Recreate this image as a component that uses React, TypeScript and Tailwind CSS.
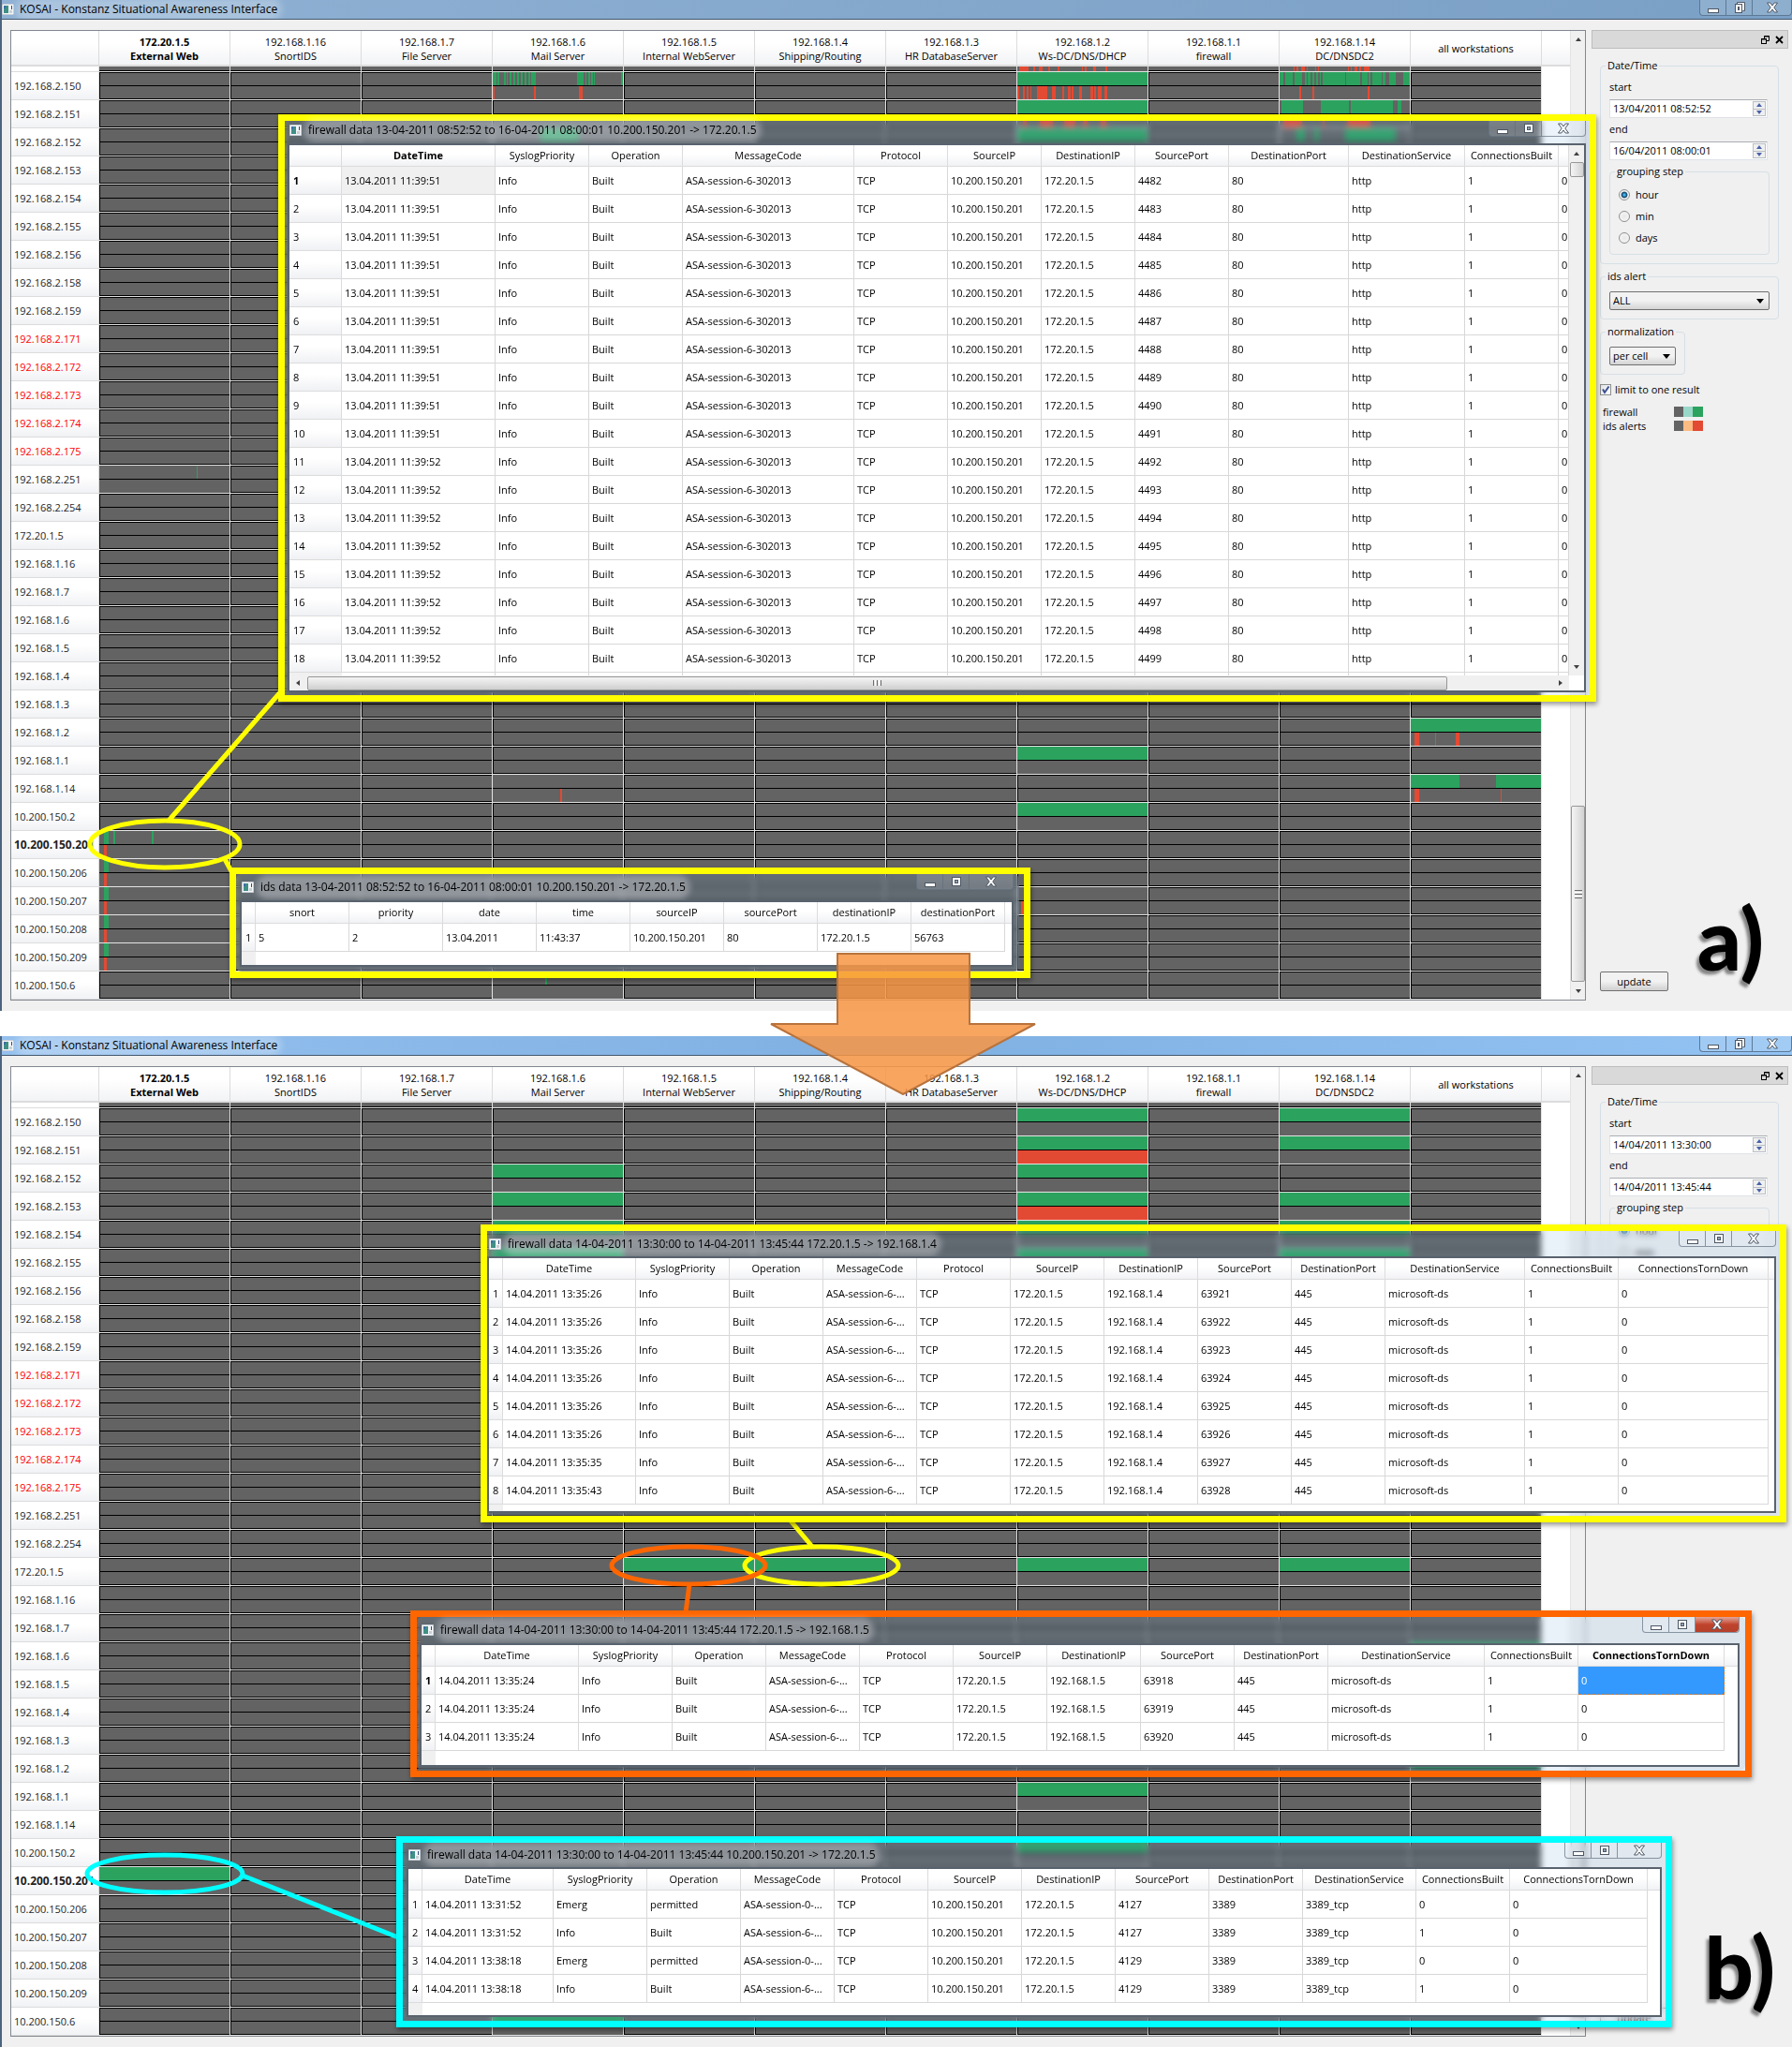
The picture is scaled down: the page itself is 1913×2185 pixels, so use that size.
import { useId } from 'react';
import clsx from 'clsx';

type Span = [number, number];
type Cell = { fw?: Span[]; ids?: Span[] };
type CellMap = Record<string, Cell>;

const HOSTS = [
  ['172.20.1.5', 'External Web'],
  ['192.168.1.16', 'SnortIDS'],
  ['192.168.1.7', 'File Server'],
  ['192.168.1.6', 'Mail Server'],
  ['192.168.1.5', 'Internal WebServer'],
  ['192.168.1.4', 'Shipping/Routing'],
  ['192.168.1.3', 'HR DatabaseServer'],
  ['192.168.1.2', 'Ws-DC/DNS/DHCP'],
  ['192.168.1.1', 'firewall'],
  ['192.168.1.14', 'DC/DNSDC2'],
  ['all workstations'],
];

const SOURCES = [
  '192.168.2.150',
  '192.168.2.151',
  '192.168.2.152',
  '192.168.2.153',
  '192.168.2.154',
  '192.168.2.155',
  '192.168.2.156',
  '192.168.2.158',
  '192.168.2.159',
  '192.168.2.171',
  '192.168.2.172',
  '192.168.2.173',
  '192.168.2.174',
  '192.168.2.175',
  '192.168.2.251',
  '192.168.2.254',
  '172.20.1.5',
  '192.168.1.16',
  '192.168.1.7',
  '192.168.1.6',
  '192.168.1.5',
  '192.168.1.4',
  '192.168.1.3',
  '192.168.1.2',
  '192.168.1.1',
  '192.168.1.14',
  '10.200.150.2',
  '10.200.150.201',
  '10.200.150.206',
  '10.200.150.207',
  '10.200.150.208',
  '10.200.150.209',
  '10.200.150.6',
];

const SUSPICIOUS = /^192\.168\.2\.17[1-5]$/;
const SELECTED = '10.200.150.201';
const FULL: Span[] = [[0, 140]];

// keys are "<source>|<host column>", spans run over a 140 unit time axis
const CELLS_A: CellMap = {
  'top|7': {
    ids: [[2, 12], [17, 19], [23, 27], [33, 35], [43, 45], [69, 70], [73, 75], [82, 85], [95, 97]],
  },
  'top|9': {
    ids: [[15, 16], [18, 20], [23, 27], [29, 30], [38, 39], [41, 42], [74, 75], [77, 78], [81, 84], [86, 88], [91, 97]],
  },
  '192.168.2.150|3': {
    fw: [[0, 4], [5, 7], [12, 14], [15, 16], [18, 20], [22, 24], [26, 28], [30, 32], [34, 36], [38, 40], [41, 46], [91, 98], [100, 101], [103, 105], [106, 108], [109, 110], [138, 140]],
    ids: [[0, 2], [44, 46], [93, 97]],
  },
  '192.168.2.150|7': {
    fw: FULL,
    ids: [[0, 2], [6, 8], [10, 12], [14, 15], [21, 32], [37, 41], [48, 50], [54, 57], [58, 60], [66, 69], [70, 71], [79, 82], [83, 85], [87, 91], [94, 97]],
  },
  '192.168.2.150|9': {
    fw: [[0, 4], [6, 14], [16, 24], [27, 29], [30, 33], [35, 37], [39, 41], [43, 44], [46, 70], [72, 87], [89, 95], [96, 98], [100, 110], [111, 114], [118, 125], [133, 140]],
    ids: [[21, 23], [35, 37], [95, 97]],
  },
  '192.168.2.151|7': { fw: FULL, ids: [[6, 10], [24, 38], [50, 62], [70, 76], [90, 96]] },
  '192.168.2.151|9': { fw: [[2, 25], [44, 75], [77, 122], [127, 131]], ids: [[4, 24], [46, 48], [73, 98]] },
  '192.168.2.152|3': { fw: [[51, 93]] },
  '192.168.2.152|7': { fw: FULL },
  '192.168.2.152|9': { fw: [[18, 27], [37, 42], [70, 125]] },
  '192.168.2.251|0': { fw: [[105, 106]] },
  '192.168.1.2|10': { fw: FULL, ids: [[4, 9], [26, 27], [48, 52]] },
  '192.168.1.1|7': { fw: FULL },
  '192.168.1.14|3': { ids: [[73, 75]] },
  '192.168.1.14|10': { fw: [[0, 52], [92, 140]], ids: [[4, 9], [97, 98]] },
  '10.200.150.2|7': { fw: FULL },
  '10.200.150.201|0': { fw: [[5, 10], [15, 17], [56, 58]], ids: [[5, 8]] },
  '10.200.150.206|0': { fw: [[5, 10]], ids: [[5, 8]] },
  '10.200.150.207|0': { fw: [[5, 10]], ids: [[5, 8]] },
  '10.200.150.208|0': { fw: [[5, 10]], ids: [[5, 8]] },
  '10.200.150.209|0': { fw: [[5, 10]], ids: [[5, 8]] },
  '10.200.150.207|7': { ids: [[4, 8]] },
  '10.200.150.6|3': { fw: [[56, 58]] },
};

const CELLS_B: CellMap = {
  'top|3': {},
  '192.168.2.150|7': { fw: FULL },
  '192.168.2.150|9': { fw: FULL },
  '192.168.2.151|7': { fw: FULL, ids: FULL },
  '192.168.2.151|9': { fw: FULL },
  '192.168.2.152|3': { fw: FULL },
  '192.168.2.152|7': { fw: FULL },
  '192.168.2.153|3': { fw: FULL },
  '192.168.2.153|7': { fw: FULL, ids: FULL },
  '192.168.2.153|9': { fw: FULL },
  '192.168.2.154|3': { fw: FULL },
  '192.168.2.154|7': { fw: FULL },
  '192.168.2.154|9': { fw: FULL },
  '192.168.2.155|3': { fw: FULL },
  '192.168.2.155|7': { fw: FULL },
  '192.168.2.155|9': { fw: FULL },
  '172.20.1.5|4': { fw: FULL },
  '172.20.1.5|5': { fw: FULL },
  '172.20.1.5|7': { fw: FULL },
  '172.20.1.5|9': { fw: FULL },
  '192.168.1.6|10': { fw: FULL },
  '192.168.1.2|10': { fw: FULL },
  '192.168.1.1|7': { fw: FULL },
  '10.200.150.2|7': { fw: FULL },
  '10.200.150.201|0': { fw: FULL },
  '10.200.150.6|3': { fw: FULL },
};

const FW_HEADERS = [
  'DateTime',
  'SyslogPriority',
  'Operation',
  'MessageCode',
  'Protocol',
  'SourceIP',
  'DestinationIP',
  'SourcePort',
  'DestinationPort',
  'DestinationService',
  'ConnectionsBuilt',
  'ConnectionsTornDown',
];

const ROWS_WEB = Array.from({ length: 18 }, (_, i) => [
  i < 10 ? '13.04.2011 11:39:51' : '13.04.2011 11:39:52',
  'Info',
  'Built',
  'ASA-session-6-302013',
  'TCP',
  '10.200.150.201',
  '172.20.1.5',
  String(4482 + i),
  '80',
  'http',
  '1',
  '0',
]);

const ROWS_SHIPPING = ['26', '26', '26', '26', '26', '26', '35', '43'].map((sec, i) => [
  `14.04.2011 13:35:${sec}`,
  'Info',
  'Built',
  'ASA-session-6-...',
  'TCP',
  '172.20.1.5',
  '192.168.1.4',
  String(63921 + i),
  '445',
  'microsoft-ds',
  '1',
  '0',
]);

const ROWS_INTERNAL = [63918, 63919, 63920].map((port) => [
  '14.04.2011 13:35:24',
  'Info',
  'Built',
  'ASA-session-6-...',
  'TCP',
  '172.20.1.5',
  '192.168.1.5',
  String(port),
  '445',
  'microsoft-ds',
  '1',
  '0',
]);

const ROWS_RDP = [
  ['13:31:52', '4127', false],
  ['13:31:52', '4127', true],
  ['13:38:18', '4129', false],
  ['13:38:18', '4129', true],
].map(([time, port, built]) => [
  `14.04.2011 ${time}`,
  built ? 'Info' : 'Emerg',
  built ? 'Built' : 'permitted',
  built ? 'ASA-session-6-...' : 'ASA-session-0-...',
  'TCP',
  '10.200.150.201',
  '172.20.1.5',
  String(port),
  '3389',
  '3389_tcp',
  built ? '1' : '0',
  '0',
]);

function AppIcon() {
  return (
    <svg viewBox="0 0 13 12" className="h-3 w-[13px] shrink-0">
      <rect width="13" height="12" fill="#f4f6f8" stroke="#9aa5b1" />
      <rect x="2" y="2" width="5" height="8" fill="#3f8f86" />
      <rect x="2" y="2" width="2" height="3" fill="#3c6ea5" />
      <rect x="8" y="7" width="3" height="3" fill="#c9cfd4" />
      <rect x="10" y="2" width="1" height="4" fill="#2b4a78" />
    </svg>
  );
}

function Arrow({ dir }: { dir: 'up' | 'down' | 'left' | 'right' }) {
  const shapes = {
    up: 'M0 5 L3 1 L6 5 Z',
    down: 'M0 1 L3 5 L6 1 Z',
    left: 'M5 0 L1 3 L5 6 Z',
    right: 'M1 0 L5 3 L1 6 Z',
  };
  return (
    <svg viewBox="0 0 6 6" className="size-1.5">
      <path d={shapes[dir]} fill="#404040" />
    </svg>
  );
}

function WindowButtons({ variant }: { variant: 'main' | 'glass' | 'active' }) {
  const main = variant === 'main';
  const line = main ? 'border-[#5c7896]' : 'border-[#5f6f7f]/70';
  return (
    <div className={clsx('flex h-[17px] shrink-0 self-start rounded-b border border-t-0 bg-white/15', line)}>
      <button type="button" aria-label="Minimize" className={clsx('flex w-7 items-center justify-center border-r pt-px', line)}>
        <svg viewBox="0 0 12 12" className="size-3">
          <rect x="0.5" y="6.5" width="11" height="4" fill="#fff" stroke="#4d5765" />
        </svg>
      </button>
      <button type="button" aria-label="Maximize" className={clsx('flex w-7 items-center justify-center border-r', line)}>
        <svg viewBox="0 0 12 12" className="size-3">
          {main ? <path d="M3.5 2.5 V0.5 H11.5 V9.5 H9.5" fill="#fff" stroke="#4d5765" /> : null}
          <rect x="1.5" y={main ? 2.5 : 1.5} width={main ? 7 : 9} height="9" fill="#fff" stroke="#4d5765" />
          <rect x="4.5" y={main ? 5.5 : 4.5} width={main ? 1 : 3} height="3" fill="#8fa3b8" stroke="#4d5765" />
        </svg>
      </button>
      <button
        type="button"
        aria-label="Close"
        className={clsx(
          'flex items-center justify-center rounded-br pb-px',
          main ? 'w-[41px]' : 'w-[46px]',
          variant === 'active' && 'bg-linear-to-b from-[#e0a59a] via-[#c0432c] to-[#b5402a]',
        )}
      >
        <svg viewBox="0 0 12 12" className="size-3">
          <path
            d="M0.5 1 H3.8 L6 4 L8.2 1 H11.5 L7.8 6 L11.5 11 H8.2 L6 8 L3.8 11 H0.5 L4.2 6 Z"
            fill="#fff"
            stroke="#4d5765"
          />
        </svg>
      </button>
    </div>
  );
}

function Lane({ spans, color }: { spans?: Span[]; color: string }) {
  return (
    <svg viewBox="0 0 140 14" preserveAspectRatio="none" className="block min-h-0 w-full flex-1" shapeRendering="crispEdges">
      {(spans ?? []).map(([from, to]) => (
        <rect key={from} x={from} y="0" width={to - from} height="14" fill={color} />
      ))}
    </svg>
  );
}

function MatrixCell({ cell }: { cell?: Cell }) {
  return (
    <div className="h-[30px] border-r border-b border-[#e4e4e4]">
      <div className={clsx('flex h-full flex-col bg-[#636363]', !cell && 'border-y border-l border-black')}>
        <Lane spans={cell?.fw} color="#2ca25f" />
        <div className="h-px bg-black" />
        <Lane spans={cell?.ids} color="#e34a33" />
      </div>
    </div>
  );
}

function Matrix({ cells }: { cells: CellMap }) {
  return (
    <div className="flex min-w-0 flex-1 border border-[#828790] bg-white">
      <table className="w-full min-w-0 flex-1 table-fixed border-separate border-spacing-0">
        <colgroup>
          <col className="w-[94px]" />
          {HOSTS.map((host) => (
            <col key={host[0]} className="w-[140px]" />
          ))}
          <col />
        </colgroup>
        <thead>
          <tr className="h-[38px] bg-linear-to-b from-white from-35% to-[#f1f2f5]">
            <td className="border-r border-b-2 border-[#dcdcdc] p-0" />
            {HOSTS.map(([ip, name], i) => (
              <th
                key={ip}
                scope="col"
                className={clsx(
                  'border-r border-b-2 border-[#dcdcdc] p-0 pt-px text-center leading-[15px]',
                  i === 0 ? 'font-bold' : 'font-normal',
                )}
              >
                <div>{ip}</div>
                {name ? <div>{name}</div> : null}
              </th>
            ))}
            <td className="border-b-2 border-[#dcdcdc] p-0" />
          </tr>
        </thead>
        <tbody>
          <tr>
            <td className="border-r border-b border-[#dcdcdc] p-0" />
            {HOSTS.map((host, i) => (
              <td key={host[0]} className="p-0">
                <div className="flex h-1.5 flex-col border-r border-b border-[#e4e4e4] bg-[#636363]">
                  <Lane spans={cells[`top|${i}`]?.ids} color="#e34a33" />
                  {cells[`top|${i}`] ? null : <div className="h-px bg-black" />}
                </div>
              </td>
            ))}
            <td className="p-0" />
          </tr>
          {SOURCES.map((ip) => (
            <tr key={ip} className="h-[30px]">
              <th
                scope="row"
                className={clsx(
                  'overflow-hidden border-r border-b border-[#dcdcdc] bg-linear-to-b from-white from-40% to-[#f1f2f5] p-0 pt-px pl-[3px] text-left whitespace-nowrap',
                  ip === SELECTED ? 'text-xs font-bold' : 'font-normal',
                  SUSPICIOUS.test(ip) ? 'text-[#ff0000]' : 'text-[#1f1f1f]',
                )}
              >
                {ip}
              </th>
              {HOSTS.map((host, i) => (
                <td key={host[0]} className="p-0">
                  <MatrixCell cell={cells[`${ip}|${i}`]} />
                </td>
              ))}
              <td className="p-0" />
            </tr>
          ))}
        </tbody>
      </table>
      <div className="flex w-4 flex-col items-center border-l border-[#e3e3e3] bg-[#f0f0f0] py-1.5">
        <Arrow dir="up" />
        <div className="flex-1" />
        <div className="flex h-[188px] w-full flex-col items-center justify-center gap-px rounded-xs border border-[#979797] bg-linear-to-r from-[#f5f5f5] to-[#d2d2d2]">
          <div className="h-px w-2 bg-[#6e6e6e]" />
          <div className="h-px w-2 bg-white" />
          <div className="h-px w-2 bg-[#6e6e6e]" />
          <div className="h-px w-2 bg-white" />
          <div className="h-px w-2 bg-[#6e6e6e]" />
        </div>
        <div className="h-[7px]" />
        <Arrow dir="down" />
      </div>
    </div>
  );
}

function DateField({ label, value }: { label: string; value: string }) {
  const id = useId();
  return (
    <div className="flex flex-col gap-[5px]">
      <label htmlFor={id}>{label}</label>
      <div className="mr-0.5 flex h-5 items-center border border-[#dfe3e8] border-t-[#abadb3] bg-white pr-px">
        <input id={id} type="text" defaultValue={value} className="min-w-0 flex-1 bg-transparent pl-[3px] outline-none" />
        <div className="flex h-4 w-3.5 flex-col border border-[#b9bec4] bg-[#f0f0f0]">
          <button type="button" aria-label={`${label} up`} className="flex flex-1 items-center justify-center border-b border-[#b9bec4]">
            <svg viewBox="0 0 6 4" className="h-1 w-1.5">
              <path d="M0 4 L3 0 L6 4 Z" fill="#4a62a8" />
            </svg>
          </button>
          <button type="button" aria-label={`${label} down`} className="flex flex-1 items-center justify-center">
            <svg viewBox="0 0 6 4" className="h-1 w-1.5">
              <path d="M0 0 L3 4 L6 0 Z" fill="#4a62a8" />
            </svg>
          </button>
        </div>
      </div>
    </div>
  );
}

function Dropdown({ label, value }: { label: string; value: string }) {
  return (
    <div className="relative h-5 w-full">
      <select
        aria-label={label}
        className="h-full w-full appearance-none rounded-xs border border-[#707070] bg-linear-to-b from-[#f2f2f2] from-50% to-[#d4d4d4] pl-[3px] text-[11px]"
      >
        <option>{value}</option>
      </select>
      <svg viewBox="0 0 8 5" className="pointer-events-none absolute top-2 right-1.5 h-[5px] w-2">
        <path d="M0 0 H8 L4 5 Z" fill="#000" />
      </svg>
    </div>
  );
}

const groupBox = 'rounded-sm border border-[#d5dfe5] px-[9px] pb-[9px]';

function Dock({ start, end }: { start: string; end: string }) {
  const group = useId();
  return (
    <aside className="flex w-[210px] shrink-0 flex-col">
      <div className="flex h-5 items-center justify-end gap-1.5 border border-[#bdbdbd] bg-[#d9d9d9] pr-1">
        <button type="button" aria-label="Float">
          <svg viewBox="0 0 9 9" className="size-[9px]">
            <path d="M3.5 3 V0.5 H8.5 V5.5 H6" fill="none" stroke="#000" />
            <path d="M3 1 H9" stroke="#000" />
            <rect x="0.5" y="3.5" width="5" height="5" fill="none" stroke="#000" />
            <path d="M0 4 H6" stroke="#000" />
          </svg>
        </button>
        <button type="button" aria-label="Close panel">
          <svg viewBox="0 0 9 9" className="size-[9px]">
            <path d="M1 1 L8 8 M8 1 L1 8" stroke="#000" strokeWidth="1.8" />
          </svg>
        </button>
      </div>
      <div className="mt-2.5 mr-2.5 ml-[9px] flex flex-1 flex-col leading-4">
        <fieldset className={groupBox}>
          <legend className="-ml-1 px-0.5">Date/Time</legend>
          <div className="flex flex-col gap-1 pt-[7px]">
            <DateField label="start" value={start} />
            <DateField label="end" value={end} />
            <fieldset className={clsx(groupBox, 'pt-[9px]')}>
              <legend className="-ml-1 px-0.5">grouping step</legend>
              <div className="flex flex-col gap-[7px]">
                {['hour', 'min', 'days'].map((step) => (
                  <label key={step} className="flex items-center gap-1.5">
                    <input
                      type="radio"
                      name={group}
                      defaultChecked={step === 'hour'}
                      className="size-3 appearance-none rounded-full border border-[#8e8f8f] bg-radial from-[#e8e8e8] to-[#fafafa] checked:from-[#3fb5ea] checked:from-10% checked:via-[#16476b] checked:via-40% checked:to-[#f4f4f4] checked:to-55%"
                    />
                    {step}
                  </label>
                ))}
              </div>
            </fieldset>
          </div>
        </fieldset>
        <fieldset className={clsx(groupBox, 'mt-[5px] pt-2')}>
          <legend className="-ml-1 px-0.5">ids alert</legend>
          <Dropdown label="ids alert" value="ALL" />
        </fieldset>
        <fieldset className={clsx(groupBox, 'mt-[5px] w-[88px] pt-2')}>
          <legend className="-ml-1 px-0.5">normalization</legend>
          <Dropdown label="normalization" value="per cell" />
        </fieldset>
        <label className="relative mt-2 flex items-center gap-1">
          <input
            type="checkbox"
            defaultChecked
            className="size-3 appearance-none border border-[#8e8f8f] bg-linear-to-br from-[#dfe3e8] to-white"
          />
          <svg viewBox="0 0 12 12" className="pointer-events-none absolute top-0.5 left-0 size-3">
            <path d="M3 5.5 L5 9 L9.5 2.5" fill="none" stroke="#3b4f8f" strokeWidth="2" />
          </svg>
          limit to one result
        </label>
        <div className="mt-2 ml-[3px] grid grid-cols-[76px_auto] items-center leading-[15px]">
          <span>firewall</span>
          <div className="flex h-[11px]">
            <i className="w-2.5 bg-[#636363]" />
            <i className="w-2.5 bg-[#99d8c9]" />
            <i className="w-[11px] bg-[#2ca25f]" />
          </div>
          <span>ids alerts</span>
          <div className="flex h-[11px]">
            <i className="w-2.5 bg-[#636363]" />
            <i className="w-2.5 bg-[#fdbb84]" />
            <i className="w-[11px] bg-[#e34a33]" />
          </div>
        </div>
        <div className="flex-1" />
        <button
          type="button"
          className="mb-2.5 h-[21px] w-[73px] rounded-xs border border-[#707070] bg-linear-to-b from-[#f2f2f2] from-50% to-[#d0d0d0]"
        >
          update
        </button>
      </div>
    </aside>
  );
}

type MainWindowProps = {
  tone: 'idle' | 'focused';
  cells: CellMap;
  start: string;
  end: string;
  children: React.ReactNode;
};

function MainWindow({ tone, cells, start, end, children }: MainWindowProps) {
  return (
    <section className="relative">
      <div className="border-l-2 border-[#4b6480] bg-[#f0f0f0]">
        <header
          className={clsx(
            'flex h-[21px] justify-between overflow-hidden border-b border-[#43586e] bg-linear-to-r',
            tone === 'idle'
              ? 'from-[#8fb1d4] via-[#84a8cc] to-[#7ba0c6]'
              : 'from-[#94c0ee] via-[#7fb0e2] to-[#93c3f3]',
          )}
        >
          <div className="flex items-center gap-1.5">
            <AppIcon />
            <h1 className="rounded-full bg-white/25 text-xs leading-4 shadow-[0_0_7px_5px_rgba(255,255,255,0.25)]">
              KOSAI - Konstanz Situational Awareness Interface
            </h1>
          </div>
          <WindowButtons variant="main" />
        </header>
        <div className="flex gap-1.5 pt-[11px] pr-1 pb-[11px] pl-[9px]">
          <Matrix cells={cells} />
          <Dock start={start} end={end} />
        </div>
      </div>
      {children}
    </section>
  );
}

type PopupProps = {
  title: string;
  frame: string;
  inset: string;
  bar: string;
  headers: string[];
  widths: number[];
  rows: string[][];
  boldHeader?: string;
  boldRow?: number;
  current?: { row: number; col: number; active: boolean };
  active?: boolean;
  scroll?: boolean;
};

function Popup({
  title,
  frame,
  inset,
  bar,
  headers,
  widths,
  rows,
  boldHeader,
  boldRow,
  current,
  active,
  scroll,
}: PopupProps) {
  return (
    <section className={clsx('absolute flex border-[7px] shadow-[1px_3px_5px_rgba(0,0,0,0.4)]', frame)}>
      <div className={clsx('flex min-w-0 flex-1 flex-col bg-[#6aa0d8]/15 backdrop-blur-[3px]', inset)}>
        <header className={clsx('flex shrink-0 justify-between', bar)}>
          <div className="flex items-center gap-[7px] pl-0.5">
            <AppIcon />
            <h2 className="rounded-full bg-white/30 text-xs leading-4 whitespace-nowrap shadow-[0_0_6px_5px_rgba(255,255,255,0.3)]">
              {title}
            </h2>
          </div>
          <WindowButtons variant={active ? 'active' : 'glass'} />
        </header>
        <div className="flex min-h-0 flex-1 flex-col border-2 border-[#59636e] bg-white">
          <div className="flex min-h-0 flex-1">
            <div className="min-w-0 flex-1 overflow-hidden bg-white">
              <table className="w-full table-fixed border-separate border-spacing-0">
                <colgroup>
                  {widths.map((w, i) => (
                    <col key={i} style={{ width: w }} />
                  ))}
                  <col />
                </colgroup>
                <thead>
                  <tr className="h-[23px] bg-linear-to-b from-white from-40% to-[#f0f1f4]">
                    <td className="border-r border-b border-[#dcdcdc] p-0" />
                    {headers.map((name) => (
                      <th
                        key={name}
                        scope="col"
                        className={clsx(
                          'overflow-hidden border-r border-b border-[#dcdcdc] p-0 pt-px text-center whitespace-nowrap',
                          name === boldHeader ? 'font-bold' : 'font-normal',
                        )}
                      >
                        {name}
                      </th>
                    ))}
                    <td className="border-b border-[#dcdcdc] p-0" />
                  </tr>
                </thead>
                <tbody>
                  {rows.map((row, r) => (
                    <tr key={r} className="h-[30px]">
                      <th
                        scope="row"
                        className={clsx(
                          'border-r border-b border-[#dcdcdc] bg-linear-to-b from-white from-40% to-[#f0f1f4] p-0 pt-0.5 pl-1 text-left',
                          r === boldRow ? 'font-bold' : 'font-normal',
                        )}
                      >
                        {r + 1}
                      </th>
                      {row.map((value, c) => {
                        const isCurrent = current?.row === r && current.col === c;
                        return (
                          <td
                            key={c}
                            className={clsx(
                              'overflow-hidden border-r border-b p-0 pt-0.5 pl-[3px] whitespace-nowrap',
                              isCurrent && current.active
                                ? 'border-dashed border-[#c8762c] bg-[#3399ff] text-white'
                                : 'border-[#d8d8d8]',
                              isCurrent && !current.active && 'bg-[#f0f0f0]',
                            )}
                          >
                            {value}
                          </td>
                        );
                      })}
                      <td className="p-0" />
                    </tr>
                  ))}
                  <tr className="h-4">
                    <td className="bg-[#f0f0f0] p-0" />
                    {scroll ? headers.map((name) => <td key={name} className="border-r border-[#d8d8d8] p-0" />) : null}
                  </tr>
                </tbody>
              </table>
            </div>
            {scroll ? (
              <div className="flex w-4 flex-col items-center bg-[#f0f0f0] py-1.5">
                <Arrow dir="up" />
                <div className="mt-1.5 h-4 w-[15px] rounded-xs border border-[#979797] bg-linear-to-r from-[#f5f5f5] to-[#d2d2d2]" />
                <div className="flex-1" />
                <Arrow dir="down" />
              </div>
            ) : null}
          </div>
          {scroll ? (
            <div className="mr-4 flex h-4 items-center bg-[#f0f0f0] pr-1.5 pl-1.5">
              <Arrow dir="left" />
              <div className="ml-[7px] flex h-[15px] w-[1217px] items-center justify-center gap-px rounded-xs border border-[#979797] bg-linear-to-b from-[#f5f5f5] to-[#cfcfcf]">
                <div className="h-1.5 w-px bg-[#6e6e6e]" />
                <div className="h-1.5 w-px bg-white" />
                <div className="h-1.5 w-px bg-[#6e6e6e]" />
                <div className="h-1.5 w-px bg-white" />
                <div className="h-1.5 w-px bg-[#6e6e6e]" />
              </div>
              <div className="flex-1" />
              <Arrow dir="right" />
            </div>
          ) : null}
        </div>
      </div>
    </section>
  );
}

const figureLabel =
  "absolute font-['Lato','Open_Sans',sans-serif] text-[92px] leading-[92px] font-black text-shadow-[-3px_4px_3px_rgba(0,0,0,0.45)]";

export default function App() {
  return (
    <main className="relative flex flex-col gap-[27px] overflow-hidden bg-white font-['Open_Sans','Noto_Sans',sans-serif] text-[11px] text-black">
      <MainWindow tone="idle" cells={CELLS_A} start="13/04/2011 08:52:52" end="16/04/2011 08:00:01">
        <Popup
          title="firewall data 13-04-2011 08:52:52 to 16-04-2011 08:00:01 10.200.150.201 -> 172.20.1.5"
          frame="left-[297px] top-[122px] h-[627px] w-[1407px] border-[#ffff00]"
          inset="pl-[3px] pr-1 pb-[3px]"
          bar="h-6 pb-1"
          headers={FW_HEADERS.slice(0, 11).concat('')}
          widths={[56, 164, 100, 100, 183, 100, 100, 100, 100, 128, 124, 100, 11]}
          rows={ROWS_WEB}
          boldHeader="DateTime"
          boldRow={0}
          current={{ row: 0, col: 0, active: false }}
          scroll
        />
        <svg className="pointer-events-none absolute inset-0 h-full w-full" fill="none" stroke="#ffff00" strokeWidth="5">
          <ellipse cx="176" cy="901" rx="80" ry="25" />
          <path d="M180 876 L300 738 M240 917 L248 932" />
        </svg>
        <Popup
          title="ids data 13-04-2011 08:52:52 to 16-04-2011 08:00:01 10.200.150.201 -> 172.20.1.5"
          frame="left-[245px] top-[926px] h-[118px] w-[855px] border-[#ffff00]"
          inset="mr-[5px] pl-1 pr-1.5 pb-[5px] rounded-md"
          bar="h-7"
          headers={['snort', 'priority', 'date', 'time', 'sourceIP', 'sourcePort', 'destinationIP', 'destinationPort']}
          widths={[15, 100, 100, 100, 100, 100, 100, 100, 100]}
          rows={[['5', '2', '13.04.2011', '11:43:37', '10.200.150.201', '80', '172.20.1.5', '56763']]}
        />
        <p className={clsx(figureLabel, 'right-[30px] bottom-8')}>a)</p>
      </MainWindow>

      <MainWindow tone="focused" cells={CELLS_B} start="14/04/2011 13:30:00" end="14/04/2011 13:45:44">
        <svg className="pointer-events-none absolute inset-0 h-full w-full" fill="none" strokeWidth="5">
          <ellipse cx="877" cy="565" rx="82" ry="20" stroke="#ffff00" />
          <path d="M842 515 L868 546" stroke="#ffff00" />
          <ellipse cx="735" cy="565" rx="82" ry="20" stroke="#ff6600" />
          <path d="M736 585 L732 615" stroke="#ff6600" />
          <ellipse cx="176" cy="894" rx="83" ry="20" stroke="#00ffff" />
          <path d="M259 896 L425 962" stroke="#00ffff" />
        </svg>
        <Popup
          title="firewall data 14-04-2011 13:30:00 to 14-04-2011 13:45:44 172.20.1.5 -> 192.168.1.4"
          frame="left-[513px] top-[201px] h-[318px] w-[1394px] border-[#ffff00]"
          inset="pr-1 pb-[3px]"
          bar="h-[27px]"
          headers={FW_HEADERS}
          widths={[15, 142, 100, 100, 100, 100, 100, 100, 100, 100, 149, 100, 160]}
          rows={ROWS_SHIPPING}
        />
        <Popup
          title="firewall data 14-04-2011 13:30:00 to 14-04-2011 13:45:44 172.20.1.5 -> 192.168.1.5"
          frame="left-[438px] top-[613px] h-[178px] w-[1432px] border-[#ff6600]"
          inset="pl-[3px] pr-1.5 pb-1 rounded-md"
          bar="h-7"
          headers={FW_HEADERS}
          widths={[15, 153, 100, 100, 100, 100, 100, 100, 100, 100, 167, 100, 156]}
          rows={ROWS_INTERNAL}
          boldHeader="ConnectionsTornDown"
          boldRow={0}
          current={{ row: 0, col: 11, active: true }}
          active
        />
        <Popup
          title="firewall data 14-04-2011 13:30:00 to 14-04-2011 13:45:44 10.200.150.201 -> 172.20.1.5"
          frame="left-[423px] top-[854px] h-[204px] w-[1362px] border-[#00ffff]"
          inset="px-1 pb-1"
          bar="h-[26px]"
          headers={FW_HEADERS}
          widths={[15, 140, 100, 100, 100, 100, 100, 100, 100, 100, 121, 100, 147]}
          rows={ROWS_RDP}
        />
        <p className={clsx(figureLabel, 'right-[18px] bottom-10')}>b)</p>
      </MainWindow>

      <svg viewBox="0 0 284 152" className="pointer-events-none absolute top-[1017px] left-[822px] h-[152px] w-[284px]">
        <path
          d="M72 1 H213 V76 H283 L142 151 L1 76 H72 Z"
          fill="#f79646"
          fillOpacity="0.86"
          stroke="#b8733c"
          strokeWidth="2"
        />
      </svg>
    </main>
  );
}
